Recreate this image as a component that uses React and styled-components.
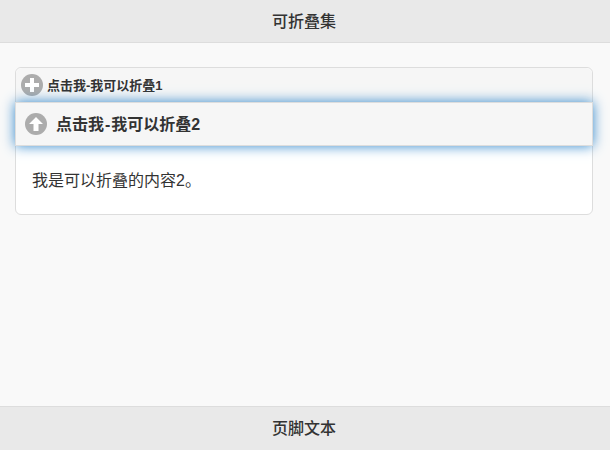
import React from "react";
import styled, { createGlobalStyle } from "styled-components";

const GlobalStyle = createGlobalStyle`
  html, body {
    margin: 0;
    height: 100%;
  }
  body {
    background: #f9f9f9;
    color: #333;
    font-family: "Liberation Sans", "Noto Sans CJK SC", sans-serif;
  }
`;

const Page = styled.div`
  width: 610px;
  height: 450px;
  display: flex;
  flex-direction: column;
  overflow: hidden;
`;

const Header = styled.div`
  flex: none;
  display: flex;
  align-items: center;
  justify-content: center;
  padding: 0 2px 2px 0;
  box-sizing: border-box;
  height: 43px;
  background: #e9e9e9;
  font-size: 16px;
  font-weight: 500;
  color: #333;
  border-bottom: 1px solid #ddd;
`;

const Footer = styled(Header)`
  height: 44px;
  padding-bottom: 3px;
  border-bottom: 0;
  border-top: 1px solid #ddd;
`;

const Content = styled.main`
  flex: 1;
  padding: 24px 17px 0 15px;
`;

const Set = styled.div`
  border: 1px solid #ddd;
  border-radius: 6px;
  background: #fff;
`;

const Heading = styled.div`
  display: flex;
  align-items: center;
  background: #f6f6f6;
  font-weight: 700;
  color: #333;
  border-radius: 6px 6px 0 0;
  height: 34px;
  padding-left: 5px;
  gap: 4px;
  font-size: 13px;
`;

const FocusedHeading = styled.div`
  display: flex;
  align-items: center;
  position: relative;
  margin: 0 -1px;
  height: 42px;
  padding-left: 9px;
  gap: 9px;
  background: #f6f6f6;
  border: 1px solid #ddd;
  font-size: 16px;
  font-weight: 700;
  color: #333;
  box-shadow: 0 0 12px #38c;
`;

const Label = styled.span`
  margin-bottom: 2px;
`;

const Dash = styled.span`
  margin: 0 ${(p) => p.$gap}px;
`;

const Body = styled.div`
  padding: 25px 16px 23px;
  font-size: 16px;
  line-height: 20px;
  color: #333;
`;

const IconCircle = styled.svg`
  width: 22px;
  height: 22px;
  flex: none;
  display: block;
`;

const PlusIcon = () => (
  <IconCircle viewBox="0 0 22 22">
    <circle cx="11" cy="11" r="11" fill="#acacac" />
    <path d="M9 4h4v5h5v4h-5v5H9v-5H4V9h5z" fill="#fff" />
  </IconCircle>
);

const UpIcon = () => (
  <IconCircle viewBox="0 0 22 22">
    <circle cx="11" cy="11" r="11" fill="#acacac" />
    <path d="M11 4l7 7h-4.5v7h-5v-7H4z" fill="#fff" />
  </IconCircle>
);

export default function App() {
  return (
    <Page>
      <GlobalStyle />
      <Header>可折叠集</Header>
      <Content>
        <Set>
          <Heading>
            <PlusIcon />
            <Label>
              点击我<Dash $gap={0}>-</Dash>我可以折叠1
            </Label>
          </Heading>
          <FocusedHeading>
            <UpIcon />
            <Label>
              点击我<Dash $gap={1}>-</Dash>我可以折叠2
            </Label>
          </FocusedHeading>
          <Body>我是可以折叠的内容2。</Body>
        </Set>
      </Content>
      <Footer>页脚文本</Footer>
    </Page>
  );
}
